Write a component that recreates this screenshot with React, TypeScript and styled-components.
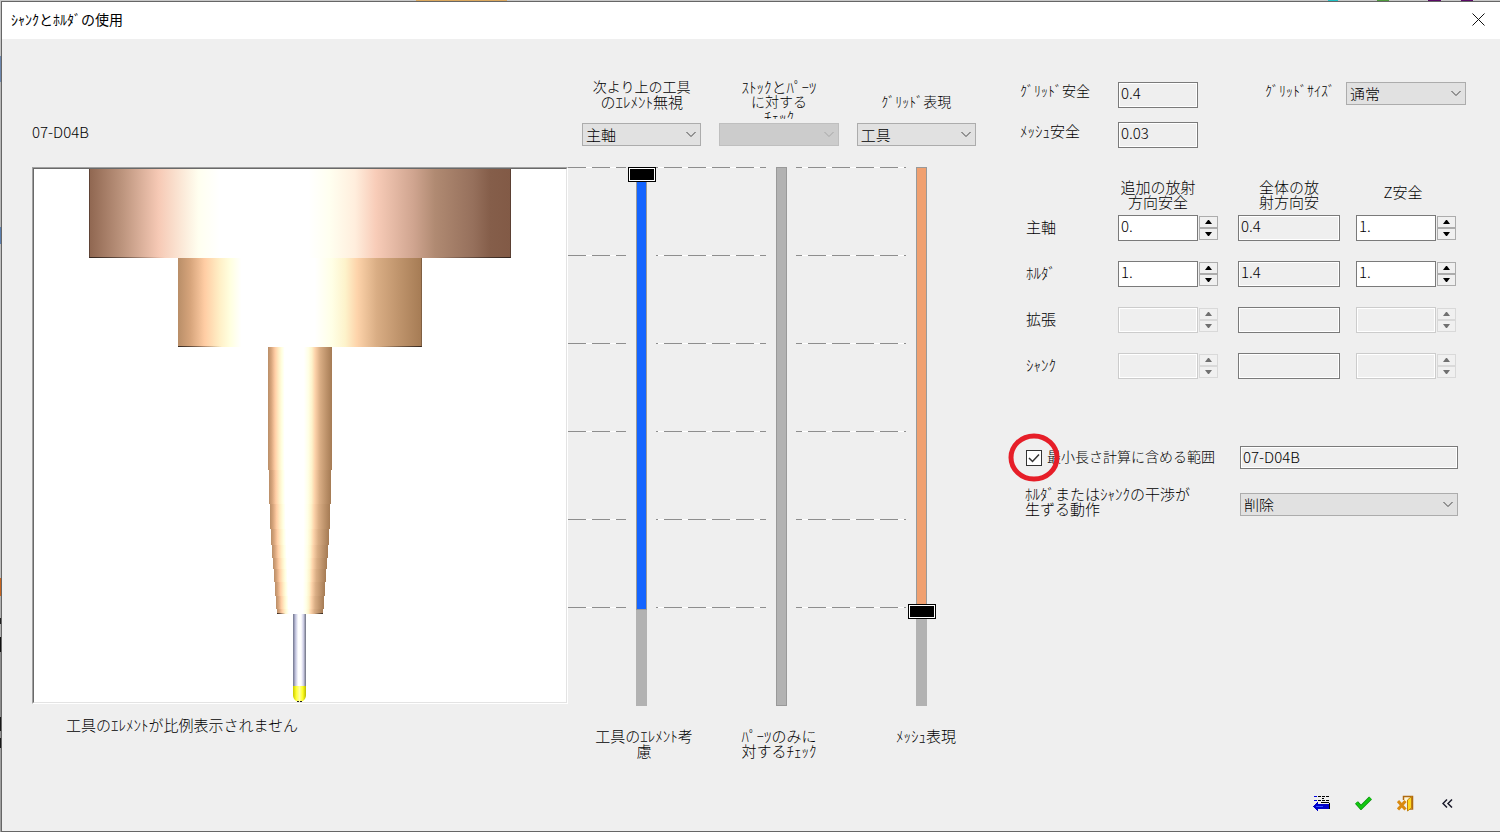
import React from "react";
import styled, { createGlobalStyle, css } from "styled-components";

const GlobalStyle = createGlobalStyle`
  *, *::before, *::after { box-sizing: border-box; }
  body { margin: 0; background: #efefef; }
  body, input, select, button {
    font-family: "Noto Sans CJK JP", "Liberation Sans", sans-serif;
    font-size: 15px;
    font-weight: 300;
    line-height: 15px;
    color: #000;
  }
`;

/* ---------- window frame ---------- */

const Desktop = styled.div`
  display: flex;
  min-height: 100vh;
  padding: 1px 0 0 1px;
  background:
    linear-gradient(90deg, #c8c8c8 416px, #dba85e 416px 507px, #c8c8c8 507px 1328px, #20c0c4 1328px 1338px, #c8c8c8 1338px 1377px, #4f9a3c 1377px 1389px, #c8c8c8 1389px 1428px, #5a0a66 1428px 1441px, #c8c8c8 1441px 1461px, #5a0a66 1461px 1473px, #c8c8c8 1473px) 0 0 / 100% 1px no-repeat,
    linear-gradient(#c4c4c4 56px, #6d87ad 56px 82px, #b8b8b8 82px 227px, #5b7fae 227px 244px, #c0c0c0 244px 578px, #c8641e 578px 596px, #b0b0b0 596px 618px, #202020 618px 624px, #b0b0b0 624px 637px, #101010 637px 652px, #8c8c8c 652px 717px, #181818 717px 731px, #909090 731px 738px, #181818 738px 748px, #a0a0a0 748px) 0 0 / 1px 100% no-repeat,
    #efefef;
`;

const Dialog = styled.div`
  flex: 1;
  min-width: 0;
  display: flex;
  flex-direction: column;
  border: solid #666;
  border-width: 1px 0 1px 1px;
  background: #efefef;
`;

const TitleBar = styled.header`
  display: flex;
  align-items: center;
  justify-content: space-between;
  height: 37px;
  padding: 0 15px 2px 9px;
  background: #fff;
`;

const Title = styled.h1`
  margin: 0;
  font-size: 14px;
  font-weight: 400;
`;

const BareButton = styled.button`
  display: flex;
  align-items: center;
  justify-content: center;
  padding: 0;
  border: 0;
  background: none;
`;

const Body = styled.main`
  display: grid;
  grid-template-columns: minmax(0, 536fr) minmax(0, 452fr) minmax(0, 446fr);
  padding: 40px 34px 0 30px;
`;

const Footer = styled.footer`
  display: flex;
  justify-content: flex-end;
  margin-top: auto;
  padding: 0 32px 16px 0;
`;

const ToolButton = styled(BareButton)`
  width: 42px;
  height: 24px;
`;

/* ---------- text ---------- */

const Text = styled.span<{ $small?: boolean }>`
  display: block;
  font-size: ${(p) => (p.$small ? 14 : 15)}px;
  white-space: nowrap;
`;

/* ---------- tool preview ---------- */

const PreviewColumn = styled.section`
  padding-top: 45px;
`;

const PreviewFrame = styled.div`
  margin: 28px 0 13px;
  border: 1px solid;
  border-color: #a0a0a0 #fff #fff #a0a0a0;
`;

const PreviewCanvas = styled.div`
  border: 1px solid;
  border-color: #696969 #e3e3e3 #e3e3e3 #696969;
  background: #fff;

  svg { display: block; width: 100%; }
`;

const PreviewCaption = styled.p`
  margin: 0;
  padding-left: 34px;
`;

/* ---------- sliders ---------- */

const SelectRow = styled.div`
  display: grid;
  grid-template-columns: repeat(3, minmax(0, 1fr));
  column-gap: 18px;
  padding: 0 44px 0 14px;
`;

const SelectLabel = styled.label<{ $low?: boolean }>`
  display: block;
  height: 40px;
  margin-bottom: 4px;
  padding-top: ${(p) => (p.$low ? 15 : 0)}px;
  overflow: hidden;
  text-align: center;
`;

const SelectBox = styled.div`
  position: relative;
  display: flex;
  height: 23px;
`;

const NativeSelect = styled.select`
  flex: 1;
  min-width: 0;
  appearance: none;
  padding: 0 20px 0 3px;
  border: 1px solid #acacac;
  border-radius: 0;
  background: #e1e1e1;

  &:disabled {
    border-color: #bfbfbf;
    background: #ccc;
    opacity: 1;
  }
`;

const Chevron = styled.svg`
  position: absolute;
  top: 8px;
  right: 5px;
  pointer-events: none;
`;

const SliderRow = styled.div`
  display: grid;
  grid-template-columns: 58fr 30px 110fr 30px 110fr 30px 84fr;
  grid-template-rows: 539px;
  margin: 21px 0 22px;
`;

const TickColumn = styled.div`
  display: flex;
  flex-direction: column;
  gap: 87px;
`;

const Tick = styled.div<{ $phase: number }>`
  height: 1px;
  background: repeating-linear-gradient(90deg, #8e8e8e 0 18px, #fff 18px 24px);
  background-size: calc(100% + 24px) 1px;
  background-position: -${(p) => p.$phase}px 0;
`;

const SliderSlot = styled.div`
  display: flex;
  min-height: 0;
  padding-left: 2px;
`;

const thumb = css`
  appearance: none;
  width: 28px;
  height: 15px;
  border: 1px solid #000;
  border-radius: 0;
  background: #000;
  box-shadow: inset 0 0 0 1px #fff;
`;

const VerticalSlider = styled.input<{ $fill: string; $extent: string }>`
  appearance: none;
  writing-mode: vertical-lr;
  direction: rtl;
  width: 28px;
  height: 539px;
  margin: 0;
  background:
    linear-gradient(${(p) => p.$fill}, ${(p) => p.$fill}) 9px 1px / 9px calc(${(p) => p.$extent} - 2px) no-repeat,
    linear-gradient(#999, #999) 8px 0 / 11px ${(p) => p.$extent} no-repeat,
    linear-gradient(#b2b2b2, #b2b2b2) 8px 0 / 11px 100% no-repeat;

  &::-webkit-slider-thumb { ${thumb} }
  &:disabled::-webkit-slider-thumb { visibility: hidden; }
`;

const SliderCaptions = styled.div`
  display: grid;
  grid-template-columns: 152fr 118fr 176fr 6fr;
  text-align: center;
`;

/* ---------- clearance form ---------- */

const FormColumn = styled.section`
  padding-top: 3px;
`;

const FieldRow = styled.div`
  display: grid;
  grid-template-columns: 98fr 80fr 67fr 81fr 120fr;
  align-items: start;
  margin-bottom: 14px;
`;

const FieldLabel = styled.label`
  padding-top: 1px;
`;

const Field = styled.input<{ $short?: boolean }>`
  flex: 1;
  width: 100%;
  min-width: 0;
  height: ${(p) => (p.$short ? 23 : 26)}px;
  padding: 0 3px ${(p) => (p.$short ? 2 : 5)}px 2px;
  border: 1px solid #7a7a7a;
  border-radius: 0;
  outline: none;
  background: #fff;

  &:read-only, &:disabled {
    background: #efefef;
    box-shadow: inset 0 0 0 1px #fff;
  }
  &:disabled { border-color: #ccc; }
`;

const ClearanceTable = styled.table`
  display: block;
  margin-top: 31px;

  thead { display: block; }
  tbody { display: flex; flex-direction: column; gap: 20px; }
  tr { display: grid; grid-template-columns: 98fr 120fr 118fr 110fr; }
  th, td { padding: 0; font-weight: 300; }
`;

const ColumnHeading = styled.th<{ $inset: number; $low?: boolean }>`
  height: 36px;
  && { padding-right: ${(p) => p.$inset}px; padding-top: ${(p) => (p.$low ? 5 : 0)}px; }
`;

const RowHeading = styled.th`
  text-align: left;
  && { padding: 4px 0 0 6px; }
`;

const Cell = styled.td<{ $inset: number }>`
  display: flex;
  && { padding-right: ${(p) => p.$inset}px; }
`;

const Stepper = styled.div`
  display: flex;
  flex-direction: column;
  margin: 1px 0 1px 1px;
`;

const StepButton = styled(BareButton)`
  width: 19px;
  height: 12px;
  border: 1px solid #acacac;
  background: #f0f0f0;
  color: #000;

  &:disabled { border-color: #d9d9d9; color: #707070; }
`;

const Options = styled.div`
  display: grid;
  grid-template-columns: 220fr 218fr 8fr;
  row-gap: 24px;
  margin-top: 67px;
`;

const CheckOption = styled.div`
  position: relative;
  display: flex;
  align-items: center;
  gap: 5px;
  padding-left: 6px;
`;

const CheckMark = styled.div`
  position: relative;
  display: flex;

  svg { position: absolute; top: 0; left: 0; pointer-events: none; }
`;

const CheckInput = styled.input`
  appearance: none;
  width: 16px;
  height: 16px;
  margin: 0;
  border: 1px solid #333;
  background: #fff;
`;

const CheckLabel = styled.label`
  padding-bottom: 2px;
`;

const Highlight = styled.svg`
  position: absolute;
  top: -13px;
  left: -12px;
  pointer-events: none;
`;

const ActionLabel = styled.label`
  margin-top: -7px;
  padding-left: 5px;
`;

/* ---------- drawings ---------- */

type Stop = [number, string];

const spindleStops: Stop[] = [
  [0, "#8f6650"], [8, "#bd957e"], [16.5, "#f6c9b5"], [26, "#fffff0"], [31, "#fff"], [52, "#fff"],
  [57, "#fffff0"], [63, "#ffeedd"], [68, "#f8ccb8"], [77, "#cfa48f"], [82, "#b08a72"],
  [91, "#96705c"], [95, "#855e4a"], [100, "#825a46"],
];
const holderStops: Stop[] = [
  [0, "#b98e68"], [5, "#d6a47b"], [11, "#ffcda4"], [17, "#ffefc6"], [21.5, "#ffffe0"], [26, "#fff"],
  [56, "#fff"], [63, "#ffffe6"], [68.5, "#fdf3cb"], [73.5, "#fdd3aa"], [81.5, "#d9ad84"],
  [90.5, "#bf946c"], [100, "#a57b54"],
];
const shankStops: Stop[] = [
  [0, "#70748c"], [20, "#c4c6e0"], [40, "#fff"], [62, "#fff"], [80, "#d0d0e8"], [100, "#6c7080"],
];
const tipStops: Stop[] = [
  [0, "#c8c800"], [25, "#ffff30"], [50, "#ffffa0"], [75, "#ffff20"], [100, "#b8b800"],
];
const rimStops: Stop[] = [
  [0, "rgba(40,30,25,0.9)"], [18, "rgba(40,30,25,0)"], [82, "rgba(40,30,25,0)"], [100, "rgba(40,30,25,0.9)"],
];

function Shade({ id, stops }: { id: string; stops: Stop[] }) {
  return (
    <linearGradient id={id}>
      {stops.map(([at, color]) => (
        <stop key={at} offset={`${at}%`} stopColor={color} />
      ))}
    </linearGradient>
  );
}

/* Extension silhouette: [height on the canvas, inset from the widest part]. */
const taperProfile: [number, number][] = [
  [178, 0], [301, 1], [335, 2], [360, 3], [376, 4], [389, 5], [400, 6], [413, 7], [427, 8], [440, 9], [445, 9],
];

function ToolDrawing() {
  return (
    <svg viewBox="0 0 532 533" role="img" aria-label="07-D04B">
      <defs>
        <Shade id="spindle" stops={spindleStops} />
        <Shade id="holder" stops={holderStops} />
        <Shade id="shank" stops={shankStops} />
        <Shade id="tip" stops={tipStops} />
        <Shade id="rim" stops={rimStops} />
      </defs>
      <rect x="55" y="0" width="422" height="89" fill="url(#spindle)" />
      <rect x="55" y="88" width="422" height="1" fill="url(#rim)" />
      <path d="M55.5 0V89M476.5 0V89" stroke="#4a352b" strokeOpacity="0.7" />
      <rect x="144" y="89" width="244" height="89" fill="url(#holder)" />
      <rect x="144" y="177" width="244" height="1" fill="url(#rim)" />
      <path d="M387.5 89V178" stroke="#5a4330" strokeOpacity="0.5" />
      {taperProfile.slice(0, -1).map(([y, inset], i) => (
        <rect
          key={y}
          x={234 + inset}
          y={y}
          width={64 - inset * 2}
          height={taperProfile[i + 1][0] - y}
          fill="url(#holder)"
        />
      ))}
      <rect x="243" y="444" width="46" height="1" fill="url(#rim)" />
      <rect x="259" y="445" width="13" height="72" fill="url(#shank)" />
      <path d="M259 517H272V526C272 530 269 533 265.500 533C262 533 259 530 259 526Z" fill="url(#tip)" />
      <path d="M263 532.500H268" stroke="#222" strokeDasharray="2 1" />
    </svg>
  );
}

function Select({ id, value, disabled }: { id: string; value: string; disabled?: boolean }) {
  return (
    <SelectBox>
      <NativeSelect id={id} disabled={disabled}>
        <option>{value}</option>
      </NativeSelect>
      <Chevron width="10" height="7" viewBox="0 0 10 7" fill="none" stroke={disabled ? "#a6a6a6" : "#444"}>
        <path d="M0.500 1L5 5.500L9.500 1" />
      </Chevron>
    </SelectBox>
  );
}

function Ticks({ phase }: { phase: number }) {
  return (
    <TickColumn>
      {[0, 1, 2, 3, 4, 5].map((i) => (
        <Tick key={i} $phase={phase} />
      ))}
    </TickColumn>
  );
}

function Spin({ label, value, disabled }: { label: string; value: string; disabled?: boolean }) {
  return (
    <>
      <Field aria-label={label} defaultValue={value} disabled={disabled} />
      <Stepper>
        <StepButton disabled={disabled} aria-label={`${label} +`}>
          <svg width="7" height="4" viewBox="0 0 7 4" fill="currentColor"><path d="M0 4L3 0H4L7 4Z" /></svg>
        </StepButton>
        <StepButton disabled={disabled} aria-label={`${label} -`}>
          <svg width="7" height="4" viewBox="0 0 7 4" fill="currentColor"><path d="M0 0L3 4H4L7 0Z" /></svg>
        </StepButton>
      </Stepper>
    </>
  );
}

const clearances = [
  { name: "主軸", extra: "0.", total: "0.4", z: "1." },
  { name: "ﾎﾙﾀﾞ", extra: "1.", total: "1.4", z: "1." },
  { name: "拡張", extra: "", total: "", z: "", disabled: true },
  { name: "ｼｬﾝｸ", extra: "", total: "", z: "", disabled: true },
];

export default function App() {
  return (
    <Desktop>
      <GlobalStyle />
      <Dialog role="dialog" aria-labelledby="dialog-title">
        <TitleBar>
          <Title id="dialog-title">ｼｬﾝｸとﾎﾙﾀﾞの使用</Title>
          <BareButton aria-label="閉じる">
            <svg width="13" height="13" viewBox="0 0 13 13" stroke="#111" fill="none">
              <path d="M0.500 0.500L12.500 12.500M12.500 0.500L0.500 12.500" />
            </svg>
          </BareButton>
        </TitleBar>

        <Body>
          <PreviewColumn>
            <Text>07-D04B</Text>
            <PreviewFrame>
              <PreviewCanvas>
                <ToolDrawing />
              </PreviewCanvas>
            </PreviewFrame>
            <PreviewCaption>工具のｴﾚﾒﾝﾄが比例表示されません</PreviewCaption>
          </PreviewColumn>

          <section>
            <SelectRow>
              <div>
                <SelectLabel htmlFor="ignore-above">
                  <Text $small>次より上の工具</Text>
                  <Text>のｴﾚﾒﾝﾄ無視</Text>
                </SelectLabel>
                <Select id="ignore-above" value="主軸" />
              </div>
              <div>
                <SelectLabel htmlFor="stock-check">
                  <Text>ｽﾄｯｸとﾊﾟｰﾂ</Text>
                  <Text $small>に対する</Text>
                  <Text>ﾁｪｯｸ</Text>
                </SelectLabel>
                <Select id="stock-check" value="" disabled />
              </div>
              <div>
                <SelectLabel htmlFor="grid-display" $low>
                  <Text $small>ｸﾞﾘｯﾄﾞ表現</Text>
                </SelectLabel>
                <Select id="grid-display" value="工具" />
              </div>
            </SelectRow>
            <SliderRow>
              <Ticks phase={0} />
              <SliderSlot>
                <VerticalSlider type="range" min="0" max="6" defaultValue="6" aria-labelledby="consider" $fill="#1464ff" $extent="443px" />
              </SliderSlot>
              <Ticks phase={16} />
              <SliderSlot>
                <VerticalSlider type="range" min="0" max="6" defaultValue="0" disabled aria-labelledby="parts-only" $fill="#b2b2b2" $extent="100%" />
              </SliderSlot>
              <Ticks phase={12} />
              <SliderSlot>
                <VerticalSlider type="range" min="0" max="6" defaultValue="1" aria-labelledby="mesh" $fill="#f0a070" $extent="443px" />
              </SliderSlot>
            </SliderRow>
            <SliderCaptions>
              <div id="consider">
                <Text>工具のｴﾚﾒﾝﾄ考</Text>
                <Text>慮</Text>
              </div>
              <div id="parts-only">
                <Text>ﾊﾟｰﾂのみに</Text>
                <Text>対するﾁｪｯｸ</Text>
              </div>
              <div id="mesh">
                <Text>ﾒｯｼｭ表現</Text>
              </div>
            </SliderCaptions>
          </section>

          <FormColumn>
            <FieldRow>
              <FieldLabel htmlFor="grid-clearance"><Text $small>ｸﾞﾘｯﾄﾞ安全</Text></FieldLabel>
              <Field id="grid-clearance" readOnly value="0.4" />
              <span />
              <FieldLabel htmlFor="grid-size"><Text $small>ｸﾞﾘｯﾄﾞｻｲｽﾞ</Text></FieldLabel>
              <Select id="grid-size" value="通常" />
            </FieldRow>
            <FieldRow>
              <FieldLabel htmlFor="mesh-clearance"><Text>ﾒｯｼｭ安全</Text></FieldLabel>
              <Field id="mesh-clearance" readOnly value="0.03" />
            </FieldRow>

            <ClearanceTable>
              <thead>
                <tr>
                  <td />
                  <ColumnHeading scope="col" $inset={40}>
                    <Text>追加の放射</Text>
                    <Text>方向安全</Text>
                  </ColumnHeading>
                  <ColumnHeading scope="col" $inset={16}>
                    <Text>全体の放</Text>
                    <Text>射方向安</Text>
                  </ColumnHeading>
                  <ColumnHeading scope="col" $inset={16} $low>
                    <Text>Z安全</Text>
                  </ColumnHeading>
                </tr>
              </thead>
              <tbody>
                {clearances.map((c) => (
                  <tr key={c.name}>
                    <RowHeading scope="row"><Text>{c.name}</Text></RowHeading>
                    <Cell $inset={20}><Spin label={`${c.name} 放射`} value={c.extra} disabled={c.disabled} /></Cell>
                    <Cell $inset={16}><Field aria-label={`${c.name} 全体`} readOnly value={c.total} /></Cell>
                    <Cell $inset={10}><Spin label={`${c.name} Z`} value={c.z} disabled={c.disabled} /></Cell>
                  </tr>
                ))}
              </tbody>
            </ClearanceTable>

            <Options>
              <CheckOption>
                <CheckMark>
                  <CheckInput type="checkbox" id="include-range" defaultChecked />
                  <svg width="16" height="16" viewBox="0 0 16 16" fill="none" stroke="#333" strokeWidth="1.500">
                    <path d="M3 8L6.500 11.500L13 4.500" />
                  </svg>
                </CheckMark>
                <CheckLabel htmlFor="include-range"><Text $small>最小長さ計算に含める範囲</Text></CheckLabel>
                <Highlight width="52" height="49" viewBox="0 0 52 49" fill="none">
                  <ellipse cx="26" cy="24.500" rx="23" ry="21.500" stroke="#e61e28" strokeWidth="5" />
                </Highlight>
              </CheckOption>
              <Field $short readOnly aria-label="範囲" value="07-D04B" />
              <span />
              <ActionLabel htmlFor="collision-action">
                <Text>ﾎﾙﾀﾞまたはｼｬﾝｸの干渉が</Text>
                <Text>生ずる動作</Text>
              </ActionLabel>
              <Select id="collision-action" value="削除" />
            </Options>
          </FormColumn>
        </Body>

        <Footer>
          <ToolButton aria-label="既定値に戻す">
            <svg width="17" height="17" viewBox="0 0 17 17" shapeRendering="crispEdges">
              <path d="M5 1.500h3M9 1.500h3M13 1.500h3M5 5.500h3M9 5.500h3M13 5.500h3" stroke="#000" />
              <path d="M1 1.500h3M1 5.500h3" stroke="#0000e0" />
              <path d="M9 3.500h2" stroke="#000" />
              <path d="M0 11.500L5 7V9H16V14H5V16Z" fill="#0000c8" />
              <path d="M8 7.500H16M16.500 8V14" stroke="#000" />
              <path d="M3 11H10" stroke="#2850ff" />
            </svg>
          </ToolButton>
          <ToolButton aria-label="OK">
            <svg width="17" height="14" viewBox="0 0 17 14">
              <path d="M1.500 6.500L6 11.500L15.500 2" fill="none" stroke="#0b8a0b" strokeWidth="4" />
              <path d="M1.500 6.500L6 11.500L15.500 2" fill="none" stroke="#12c812" strokeWidth="2.600" />
            </svg>
          </ToolButton>
          <ToolButton aria-label="キャンセル">
            <svg width="17" height="17" viewBox="0 0 17 17">
              <path d="M6.500 5V1.500H15.500V14H13" fill="#fff6d8" stroke="#b06a10" strokeWidth="1.500" />
              <path d="M10.500 5L14.500 1.500V13L10.500 16Z" fill="#ffd820" stroke="#c08010" />
              <path d="M1 6L8.500 14.500M8.500 6L1 14.500" stroke="#d98a10" strokeWidth="3" fill="none" />
            </svg>
          </ToolButton>
          <ToolButton aria-label="折りたたむ">
            <svg width="11" height="9" viewBox="0 0 11 9" fill="none" stroke="#1a1a2a" strokeWidth="1.500">
              <path d="M5 0.500L1 4.500L5 8.500M10 0.500L6 4.500L10 8.500" />
            </svg>
          </ToolButton>
        </Footer>
      </Dialog>
    </Desktop>
  );
}
